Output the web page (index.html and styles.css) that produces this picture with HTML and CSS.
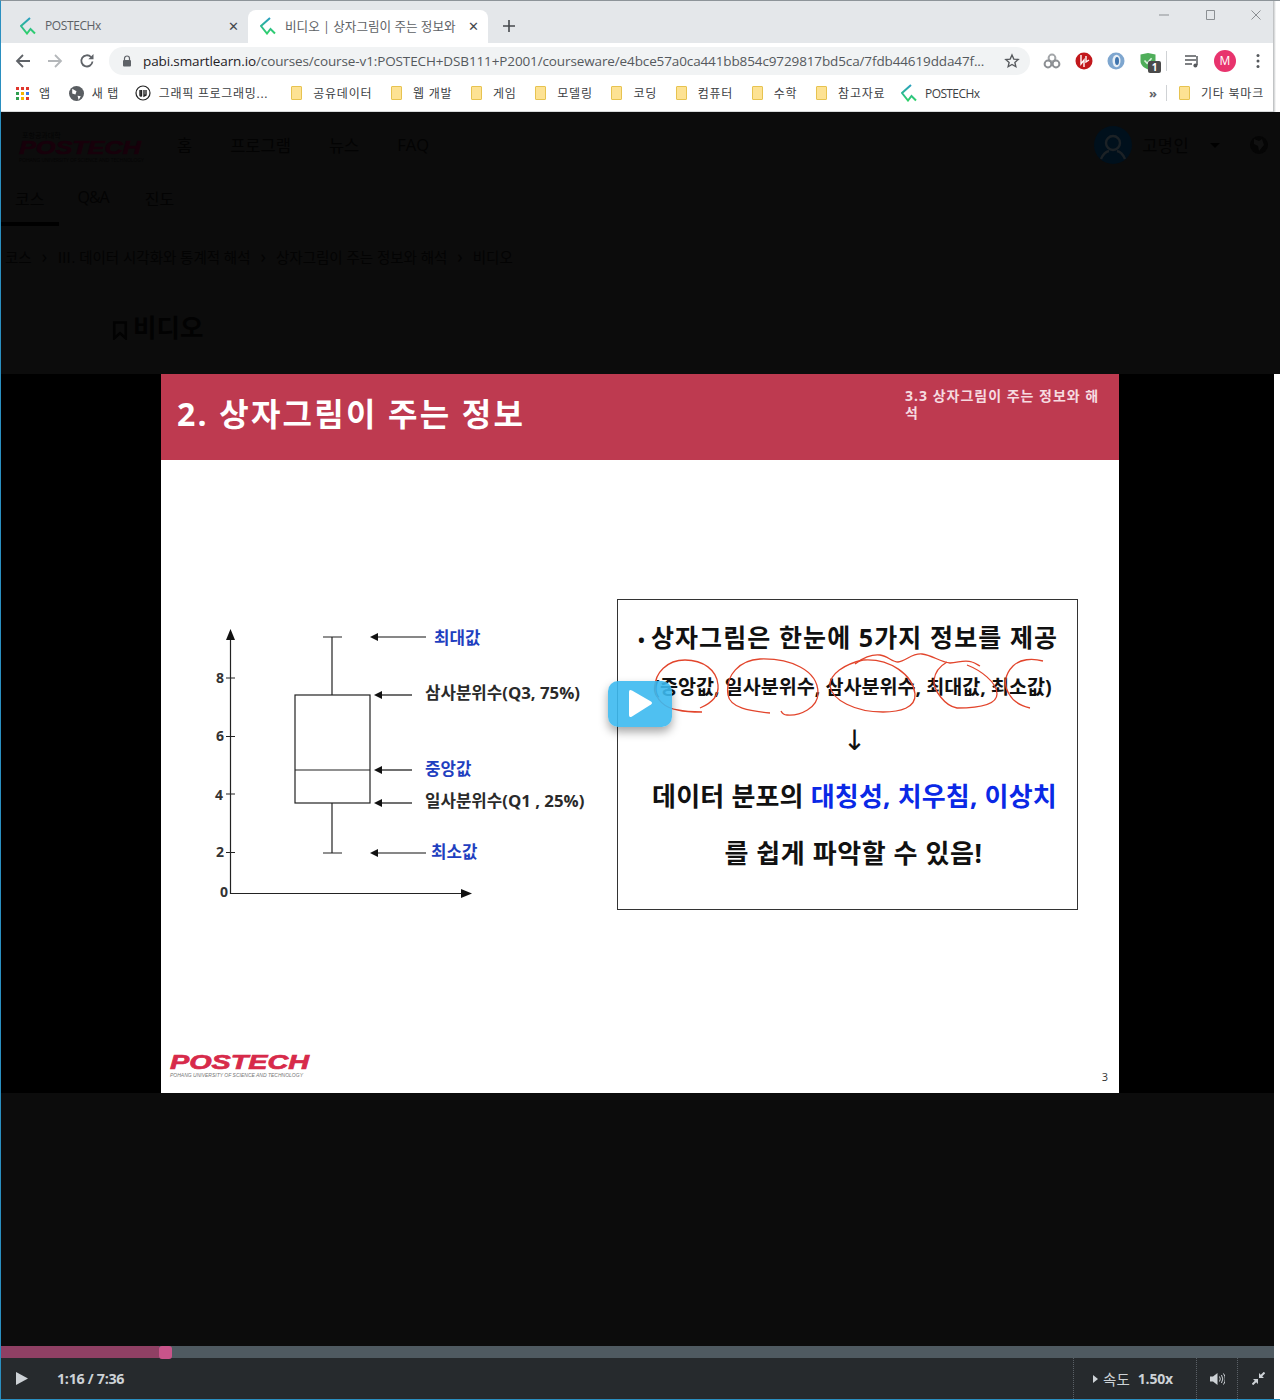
FILE: index.html
```html
<!DOCTYPE html>
<html lang="ko">
<head>
<meta charset="utf-8">
<title>비디오 | 상자그림이 주는 정보와 해석</title>
<link rel="stylesheet" href="styles.css">
</head>
<body>
<div class="window">

  <div class="tabstrip">
    <div class="tab first">
      <svg class="favicon" viewBox="0 0 16 18"><path d="M10 1 1 9l6 7.500 3.500-4.500 4.500 4.500" fill="none" stroke="url(#fav)" stroke-width="2"/><defs><linearGradient id="fav" x1="0" y1="0" x2="0" y2="1"><stop offset="0" stop-color="#2a9fc0"/><stop offset="1" stop-color="#2fd06a"/></linearGradient></defs></svg>
      <span class="tab-title">POSTECHx</span>
      <span class="tab-x">✕</span>
    </div>
    <div class="tab active">
      <svg class="favicon" viewBox="0 0 16 18"><path d="M10 1 1 9l6 7.500 3.500-4.500 4.500 4.500" fill="none" stroke="url(#fav)" stroke-width="2"/></svg>
      <span class="tab-title">비디오 | 상자그림이 주는 정보와</span>
      <span class="tab-x">✕</span>
    </div>
    <svg class="newtab" viewBox="0 0 12 12"><path d="M6 0v12M0 6h12" stroke="#45494d" stroke-width="1.6"/></svg>
    <div class="winbtns">
      <svg viewBox="0 0 12 12"><path d="M1 6h10" stroke="#8b8f93"/></svg>
      <svg viewBox="0 0 12 12"><path d="M2.500 1.500h8v9h-8z" fill="none" stroke="#8b8f93"/></svg>
      <svg viewBox="0 0 12 12"><path d="M1.500 1.500l9 9M10.500 1.500l-9 9" stroke="#8b8f93"/></svg>
    </div>
  </div>

  <div class="toolbar">
    <svg class="nav" viewBox="0 0 16 16"><path d="M15 8H2M8 2 2 8l6 6" fill="none" stroke="#5f6368" stroke-width="1.8"/></svg>
    <svg class="nav" viewBox="0 0 16 16"><path d="M1 8h13M8 2l6 6-6 6" fill="none" stroke="#b4b7ba" stroke-width="1.8"/></svg>
    <svg class="nav" viewBox="0 0 16 16"><path d="M13.500 8.500A5.600 5.600 0 1 1 12 4" fill="none" stroke="#5f6368" stroke-width="1.8"/><path d="M14.500 1v5.200H9.300z" fill="#5f6368"/></svg>
    <div class="omnibox">
      <svg class="lock" viewBox="0 0 10 12"><path d="M2.500 5V3.500a2.500 2.500 0 0 1 5 0V5" fill="none" stroke="#5f6368" stroke-width="1.2"/><rect x="1" y="5" width="8" height="6.500" rx="1" fill="#5f6368"/></svg>
      <span class="url"><b>pabi.smartlearn.io</b>/courses/course-v1:POSTECH+DSB111+P2001/courseware/e4bce57a0ca441bb854c9729817bd5ca/7fdb44619dda47f...</span>
      <svg class="star" viewBox="0 0 24 24"><path d="m12 3 2.700 6.100 6.600.6-5 4.400 1.500 6.500-5.800-3.400-5.800 3.400 1.500-6.500-5-4.400 6.600-.6z" fill="none" stroke="#55585c" stroke-width="2"/></svg>
    </div>
    <div class="extensions">
      <svg class="ext" viewBox="0 0 18 18"><circle cx="9" cy="6" r="3.400" fill="none" stroke="#a3a6a9" stroke-width="2"/><circle cx="5" cy="12" r="3.400" fill="none" stroke="#8d9094" stroke-width="2"/><circle cx="13" cy="12" r="3.400" fill="none" stroke="#8d9094" stroke-width="2"/></svg>
      <svg class="ext" viewBox="0 0 18 18"><circle cx="9" cy="9" r="8.500" fill="#c2181c"/><path d="M6 3v9l3-4v7M11 4v6l3-2" fill="none" stroke="#fff" stroke-width="1.400"/></svg>
      <svg class="ext" viewBox="0 0 18 18"><circle cx="9" cy="9" r="8.500" fill="#7ea6cf"/><ellipse cx="9.500" cy="9" rx="4" ry="6.200" fill="#e8eff6"/><ellipse cx="10" cy="9" rx="2" ry="4" fill="#3f74ad"/></svg>
      <span class="ext-shield">
        <svg class="ext" viewBox="0 0 18 18"><path d="M1.500 2.500 9 1l7.500 1.500V9c0 4-3.500 7-7.500 8.500C5 16 1.500 13 1.500 9z" fill="#4fae5a"/><path d="m5.500 8.500 2.600 2.800 4.500-5" fill="none" stroke="#d9f0dc" stroke-width="1.600"/></svg>
        <span class="badge">1</span>
      </span>
      <span class="sep"></span>
      <svg class="ext" viewBox="0 0 18 18"><path d="M2 4h11M2 8h11M2 12h7" stroke="#55585c" stroke-width="1.500"/><path d="M14 4v9" stroke="#55585c" stroke-width="1.500"/><circle cx="12.400" cy="13.400" r="2" fill="#55585c"/></svg>
      <span class="avatar">M</span>
      <svg class="kebab" viewBox="0 0 4 16"><circle cx="2" cy="2.500" r="1.500" fill="#55585c"/><circle cx="2" cy="8" r="1.500" fill="#55585c"/><circle cx="2" cy="13.500" r="1.500" fill="#55585c"/></svg>
    </div>
  </div>

  <div class="bookmarks">
    <span class="bm bm-apps">
      <span class="apps"><i class="r"></i><i class="r"></i><i class="r"></i><i class="g"></i><i class="y"></i><i class="b"></i><i class="g"></i><i class="y"></i><i class="r"></i></span>앱
    </span>
    <span class="bm bm-new">
      <svg class="bm-icon" viewBox="0 0 14 14"><circle cx="7" cy="7" r="7" fill="#5a5e62"/><path d="M3 2.500 7 5 6 8 3 7zM8 9l3 .5L9 13z" fill="#fff"/></svg>새 탭
    </span>
    <span class="bm bm-ue">
      <svg class="bm-icon" viewBox="0 0 16 16"><circle cx="8" cy="8" r="7" fill="none" stroke="#222" stroke-width="1.200"/><path d="M5 5v5q0 1.600 1.500.8V5M9 5v6l2-1V5" fill="none" stroke="#222" stroke-width="1.400"/></svg>그래픽 프로그래밍...
    </span>
    <span class="bm"><i class="folder"></i>공유데이터</span>
    <span class="bm"><i class="folder"></i>웹 개발</span>
    <span class="bm"><i class="folder"></i>게임</span>
    <span class="bm"><i class="folder"></i>모델링</span>
    <span class="bm"><i class="folder"></i>코딩</span>
    <span class="bm"><i class="folder"></i>컴퓨터</span>
    <span class="bm"><i class="folder"></i>수학</span>
    <span class="bm"><i class="folder"></i>참고자료</span>
    <span class="bm bm-posx">
      <svg class="favicon" viewBox="0 0 16 18"><path d="M10 1 1 9l6 7.500 3.500-4.500 4.500 4.500" fill="none" stroke="url(#fav)" stroke-width="2"/></svg>POSTECHx
    </span>
    <span class="bm-right">
      <span class="chevrons">»</span>
      <span class="bm-sep"></span>
      <span class="bm"><i class="folder"></i>기타 북마크</span>
    </span>
  </div>

  <div class="viewport">
    <div class="dimmed">
      <div class="site-head">
        <div class="site-logo">
          <span class="site-logo-kr">포항공과대학</span>
          <span class="site-logo-en">POSTECH</span>
          <span class="site-logo-sub">POHANG UNIVERSITY OF SCIENCE AND TECHNOLOGY</span>
        </div>
        <nav class="site-nav"><span>홈</span><span>프로그램</span><span>뉴스</span><span>FAQ</span></nav>
        <div class="site-user">
          <svg class="site-avatar" viewBox="0 0 38 38"><circle cx="19" cy="19" r="19" fill="#00101c"/><circle cx="19" cy="17" r="7" fill="none" stroke="#1c2226" stroke-width="2.400"/><path d="M7 33q3-7 8-8M31 33q-3-7-8-8" fill="none" stroke="#1c2226" stroke-width="2.400"/></svg>
          <span class="site-name">고명인</span>
          <i class="caret"></i>
          <svg class="globe" viewBox="0 0 18 18"><circle cx="9" cy="9" r="9" fill="#050505"/><path d="M4 3l5 2 3-2 2 6-5 6-1-5-4-2z" fill="#111"/></svg>
        </div>
      </div>
      <div class="course-tabs">
        <span class="course-tab on">코스</span><span class="course-tab qa">Q&amp;A</span><span class="course-tab">진도</span>
      </div>
      <div class="crumbs">
        <span>코스</span><i>›</i><span>Ⅲ. 데이터 시각화와 통계적 해석</span><i>›</i><span>상자그림이 주는 정보와 해석</span><i>›</i><span>비디오</span>
      </div>
      <div class="unit-title">
        <svg class="bookmark-icon" viewBox="0 0 14 18"><path d="M1.500 1.500h11v15L7 11.500l-5.500 5z" fill="none" stroke="#020202" stroke-width="2.400"/></svg>
        <h2>비디오</h2>
      </div>
    </div>

    <div class="stage">
      <div class="slide">
        <div class="slide-head">
          <h1>2. 상자그림이 주는 정보</h1>
          <p>3.3 상자그림이 주는 정보와 해<br>석</p>
        </div>
        <div class="slide-body">
          <svg class="boxplot" viewBox="0 0 410 300" width="410" height="300">
            <defs>
              <marker id="tip" markerWidth="8" markerHeight="8" refX="0" refY="4" orient="auto" markerUnits="userSpaceOnUse"><path d="M0 0 8 4 0 8z" fill="#111"/></marker>
            </defs>
            <g class="axis">
              <path d="M40.500 25V283.500H272"/>
              <path d="M36 68h9M36 126.500h9M36 184h9M36 242.500h9"/>
            </g>
            <path d="M36 30 40.500 19 45 30z" fill="#111"/>
            <path d="M271 279l11 4.500-11 4.500z" fill="#111"/>
            <g class="axis-num">
              <text x="26" y="73">8</text><text x="26" y="131">6</text><text x="25" y="190">4</text><text x="26" y="247">2</text><text x="30" y="287">0</text>
            </g>
            <g class="box">
              <path d="M133 27h19M142 27v58M142 193v50M133 243h19"/>
              <rect x="105" y="85" width="75" height="108"/>
              <path d="M105 160h75"/>
            </g>
            <g class="arrows">
              <path d="M236 27H188" marker-end="url(#tip)"/>
              <path d="M222 85H192" marker-end="url(#tip)"/>
              <path d="M222 160H192" marker-end="url(#tip)"/>
              <path d="M222 193H192" marker-end="url(#tip)"/>
              <path d="M236 243H188" marker-end="url(#tip)"/>
            </g>
            <g class="lbl">
              <text class="blue" x="244" y="34">최대값</text>
              <text x="235" y="89">삼사분위수(Q3, 75%)</text>
              <text class="blue" x="235" y="165">중앙값</text>
              <text x="235" y="197">일사분위수(Q1 , 25%)</text>
              <text class="blue" x="241" y="248">최소값</text>
            </g>
          </svg>

          <div class="summary">
            <p class="sum-title"><span class="dot">•</span>상자그림은 한눈에 5가지 정보를 제공</p>
            <p class="sum-list">(중앙값, 일사분위수, 삼사분위수, 최대값, 최소값)</p>
            <p class="sum-arrow">↓</p>
            <p class="sum-big">데이터 분포의 <em>대칭성, 치우침, 이상치</em></p>
            <p class="sum-big sum-last">를 쉽게 파악할 수 있음!</p>
            <svg class="scribble" viewBox="0 0 490 160" width="490" height="160">
              <path d="M100 118C112 113 119 105 118 95 117 80 103 70 85 70 67 70 55 83 55 97 55 110 65 118 78 120 86 122 95 122 102 122"/>
              <path d="M170 123C150 121 130 118 128 105 125 85 140 70 160 69 190 68 218 80 218 103 218 118 200 126 187 125 184 125 182 123 181 121"/>
              <path d="M263 70C290 68 313 85 315 104 316 118 300 122 283 122 255 122 232 110 230 96 229 84 245 74 263 70"/>
              <path d="M255 74C262 68 272 64 280 65 288 66 292 72 298 72 306 71 312 63 322 64 332 65 340 72 350 73 358 73 364 69 372 72 375 73 378 75 380 76"/>
              <path d="M367 75C380 80 397 92 397 104 397 114 380 118 357 118 345 116 333 100 334 90 335 82 340 76 347 72"/>
              <path d="M443 71C432 68 420 69 413 76 405 84 403 95 409 104 413 111 421 116 430 118"/>
            </svg>
          </div>
        </div>
        <div class="slide-foot">
          <div class="slide-logo">
            <span class="slide-logo-en">POSTECH</span>
            <span class="slide-logo-sub">POHANG UNIVERSITY OF SCIENCE AND TECHNOLOGY</span>
          </div>
          <span class="slide-num">3</span>
        </div>
      </div>
      <div class="bigplay"><svg viewBox="0 0 26 30" width="26" height="30"><path d="M2 3q0-3 3-1.500l19 11q2 1.500 0 3L5 27.500q-3 1.500-3-1.500z" fill="#fff"/></svg></div>
    </div>

    <div class="below"></div>

    <div class="player">
      <div class="scrub"><div class="scrub-fill"></div><div class="scrub-knob"></div></div>
      <div class="controls">
        <svg class="ctl-play" viewBox="0 0 12 13"><path d="M0 0l12 6.500L0 13z" fill="#cdd2d6"/></svg>
        <span class="time">1:16 / 7:36</span>
        <div class="ctl-right">
          <div class="ctl-cell speed"><i class="tri"></i>속도 <b>1.50x</b></div>
          <div class="ctl-cell vol">
            <svg viewBox="0 0 15 14" width="15" height="14"><path d="M0 4.500h3L7.500 1v12L3 9.500H0z" fill="#cdd2d6"/><path d="M9.500 4.500q1.600 2.500 0 5M11.500 3q2.600 4 0 8M13.500 1.500q3.600 5.500 0 11" fill="none" stroke="#cdd2d6"/></svg>
          </div>
          <div class="ctl-cell full">
            <svg viewBox="0 0 13 13" width="13" height="13"><path d="M12.500.5 8 5M.5 12.500 5 8" stroke="#cdd2d6" stroke-width="2"/><path d="M7 1v5h5zM1 7h5v5z" fill="#cdd2d6"/></svg>
          </div>
        </div>
      </div>
    </div>
    <div class="edge"></div>
  </div>
  <div class="chrome-edge"></div>
</div>
</body>
</html>
```
FILE: styles.css
```css
* {
  box-sizing: border-box;
}

html, body {
  margin: 0;
  padding: 0;
}

body {
  font-family: "Open Sans", "Noto Sans CJK KR", sans-serif;
  background: #fff;
}

p, h1, h2 {
  margin: 0;
}

.window {
  width: 1280px;
  height: 1400px;
  display: flex;
  flex-direction: column;
  border-top: 1px solid #8d9499;
  border-left: 1px solid #2a8fc0;
  overflow: hidden;
  position: relative;
}

/* tab strip */

.tabstrip {
  height: 42px;
  background: #e4e7ea;
  display: flex;
  align-items: flex-end;
  flex: none;
  padding-left: 7px;
}

.tab {
  width: 240px;
  height: 33px;
  display: flex;
  align-items: center;
  padding: 0 6px 2px 12px;
  font-size: 12px;
  color: #5d6165;
}

.tab.first .tab-title {
  letter-spacing: -0.4px;
}

.tab.active {
  background: #fff;
  border-radius: 8px 8px 0 0;
  font-size: 12.6px;
}

.favicon {
  width: 16px;
  height: 18px;
  flex: none;
}

.tab-title {
  flex: 1;
  margin-left: 9px;
  white-space: nowrap;
  overflow: hidden;
}

.tab-x {
  font-size: 13px;
  color: #45494d;
  width: 14px;
  margin-left: 4px;
}

.newtab {
  width: 12px;
  height: 12px;
  margin: 0 0 11px 15px;
}

.winbtns {
  margin-left: auto;
  align-self: flex-start;
  display: flex;
  gap: 34px;
  padding: 8px 18px 0 0;
}

.winbtns svg {
  width: 12px;
  height: 12px;
}

/* toolbar */

.toolbar {
  height: 37px;
  background: #fff;
  display: flex;
  align-items: center;
  padding: 0 0 1px 14px;
  flex: none;
}

.nav {
  width: 16px;
  height: 16px;
  margin-right: 16px;
}

.omnibox {
  width: 921px;
  height: 28px;
  margin-left: -2px;
  border-radius: 14px;
  background: #f1f3f4;
  display: flex;
  align-items: center;
  padding-left: 13px;
}

.lock {
  width: 10px;
  height: 12px;
  flex: none;
}

.url {
  margin-left: 11px;
  font-size: 13.5px;
  color: #55595d;
  white-space: nowrap;
  letter-spacing: -0.12px;
}

.url b {
  font-weight: 400;
  color: #1f2124;
}

.star {
  width: 16px;
  height: 16px;
  margin-left: auto;
  margin-right: 10px;
  flex: none;
}

.extensions {
  display: flex;
  align-items: center;
  margin-left: 13px;
}

.ext {
  width: 18px;
  height: 18px;
  display: block;
  margin-right: 14px;
}

.ext-shield {
  position: relative;
}

.badge {
  position: absolute;
  left: 9px;
  top: 9px;
  width: 13px;
  height: 12px;
  background: #4a4a4a;
  color: #fff;
  border-radius: 2px;
  font-size: 10px;
  font-weight: 700;
  line-height: 12px;
  text-align: center;
}

.sep {
  width: 1px;
  height: 20px;
  background: #cfd2d5;
  margin: 0 16px 0 -5px;
}

.avatar {
  width: 22px;
  height: 22px;
  border-radius: 50%;
  background: #e8336d;
  color: #fff;
  font-size: 12px;
  line-height: 22px;
  text-align: center;
  margin-left: -1px;
}

.kebab {
  width: 4px;
  height: 16px;
  margin-left: 20px;
}

/* bookmarks */

.bookmarks {
  height: 32px;
  background: #fff;
  display: flex;
  align-items: center;
  padding: 0 0 5px 15px;
  font-size: 12px;
  color: #3c4043;
  flex: none;
  border-bottom: 1px solid #d8dadc;
}

.bm {
  display: flex;
  align-items: center;
  margin-right: 18.6px;
  white-space: nowrap;
  letter-spacing: 0.8px;
}

.bm-apps {
  margin-right: 18px;
}

.apps {
  display: grid;
  grid-template-columns: repeat(3, 3px);
  gap: 2px;
  margin-right: 10px;
}

.apps i {
  width: 3px;
  height: 3px;
  display: block;
}

.apps .r { background: #e0362c; }
.apps .g { background: #2f9e4f; }
.apps .y { background: #f5b400; }
.apps .b { background: #3b78e7; }

.bm-icon {
  width: 15px;
  height: 15px;
  margin-right: 8px;
}

.bm-new {
  letter-spacing: 0.6px;
  margin-right: 16px;
}

.bm-ue .bm-icon {
  width: 16px;
  height: 16px;
  margin-right: 8px;
}

.bm-ue {
  letter-spacing: 0.7px;
  margin-right: 23px;
}

.folder {
  width: 11px;
  height: 14px;
  background: #fde293;
  border: 1px solid #e7c350;
  border-radius: 1px;
  margin-right: 11px;
  display: block;
}

.bm-posx {
  letter-spacing: -0.6px;
  margin-left: -3px;
}

.bm-posx .favicon {
  margin-right: 8px;
}

.bm-right {
  margin-left: auto;
  display: flex;
  align-items: center;
}

.bm-right .bm {
  margin-right: 16px;
}

.chevrons {
  font-size: 13px;
  font-weight: 700;
  color: #5f6368;
}

.bm-sep {
  width: 1px;
  height: 16px;
  background: #cfd2d5;
  margin: 0 12px 0 9px;
}

/* dimmed page behind the lightbox */

.viewport {
  flex: 1;
  display: flex;
  flex-direction: column;
  position: relative;
  background: #0c0c0c;
  min-height: 0;
}

.dimmed {
  height: 262px;
  flex: none;
  color: #030303;
  background: #0c0c0c;
}

.site-head {
  height: 68px;
  display: flex;
  align-items: center;
  padding: 0 0 2px 18px;
}

.site-logo {
  width: 125px;
  display: flex;
  flex-direction: column;
  margin-top: 5px;
}

.site-logo-kr {
  font-size: 7px;
  line-height: 8px;
  margin-left: 3px;
  color: #040404;
}

.site-logo-en {
  font: italic 900 18px/17px "Liberation Sans", sans-serif;
  color: #17000a;
  -webkit-text-stroke: 0.6px #17000a;
  white-space: nowrap;
  transform: scaleX(1.4);
  transform-origin: left center;
}

.site-logo-sub {
  font-size: 5px;
  line-height: 7px;
  white-space: nowrap;
  color: #050505;
}

.site-nav {
  display: flex;
  font-size: 16.5px;
  margin-left: 33px;
  gap: 38px;
}

.site-user {
  margin-left: auto;
  display: flex;
  align-items: center;
  padding-right: 12px;
}

.site-avatar {
  width: 38px;
  height: 38px;
}

.site-name {
  font-size: 16.5px;
  margin-left: 10px;
  letter-spacing: 0.4px;
}

.caret {
  width: 0;
  height: 0;
  border: 5px solid transparent;
  border-top: 5px solid #000;
  border-bottom: 0;
  margin: 0 0 0 21px;
}

.globe {
  width: 18px;
  height: 18px;
  margin-left: 30px;
}

.course-tabs {
  display: flex;
  height: 55px;
  padding-left: 14px;
  font-size: 16px;
  position: relative;
}

.course-tab {
  margin-right: 33px;
  padding-top: 6px;
}

.course-tab.qa {
  letter-spacing: -1px;
  margin-right: 36px;
}

.course-tab.on::after {
  content: "";
  position: absolute;
  left: 0;
  top: 42px;
  width: 58px;
  height: 4px;
  background: #000;
}

.crumbs {
  display: flex;
  gap: 8px;
  padding: 11px 0 0 4px;
  font-size: 14.5px;
  height: 62px;
  white-space: nowrap;
}

.crumbs i {
  font-style: normal;
  font-size: 18px;
  line-height: 20px;
  margin: 0 2px;
}

.unit-title {
  display: flex;
  align-items: flex-end;
  padding: 6px 0 0 111px;
  height: 46px;
  gap: 5px;
}

.bookmark-icon {
  width: 16px;
  height: 19px;
  margin-bottom: 3px;
}

.unit-title h2 {
  font-size: 25.5px;
  line-height: 32px;
  font-weight: 700;
  color: #020202;
}

/* lightbox */

.stage {
  height: 719px;
  flex: none;
  background: #000;
  display: flex;
  justify-content: center;
  position: relative;
}

.slide {
  width: 958px;
  height: 719px;
  background: #fff;
  display: flex;
  flex-direction: column;
  margin-left: -1px;
}

.slide-head {
  height: 86px;
  flex: none;
  background: #be3a50;
  color: #fff;
  display: flex;
  justify-content: space-between;
  padding: 0 21px 0 16px;
}

.slide-head h1 {
  font-size: 32px;
  line-height: 80px;
  font-weight: 700;
  letter-spacing: 2.2px;
  white-space: nowrap;
}

.slide-head p {
  width: 193px;
  font-size: 14px;
  line-height: 17px;
  padding-top: 13px;
  color: #f6dbe0;
  font-weight: 700;
  letter-spacing: 1px;
  white-space: nowrap;
}

.slide-body {
  flex: 1;
  display: flex;
  padding: 139px 0 0 29px;
  align-items: flex-start;
  min-height: 0;
}

.boxplot {
  flex: none;
  margin-top: 11px;
}

.axis path,
.box path,
.box rect,
.arrows path {
  fill: none;
  stroke: #222;
  stroke-width: 1.2;
}

.arrows path {
  stroke: #111;
}

.axis-num text {
  font: 700 14px "Open Sans", sans-serif;
  fill: #333;
}

.lbl text {
  font: 700 16.8px "Open Sans", "Noto Sans CJK KR", sans-serif;
  fill: #2a2a2a;
}

.lbl text.blue {
  fill: #1f3fc0;
}

.summary {
  width: 461px;
  height: 311px;
  margin-left: 17px;
  border: 1px solid #333;
  position: relative;
  color: #111;
  text-align: center;
  font-weight: 700;
}

.summary p {
  white-space: nowrap;
}

.sum-title {
  font-size: 25px;
  line-height: 34px;
  padding-top: 20px;
  text-align: left;
  padding-left: 20px;
  letter-spacing: 1.1px;
}

.dot {
  font-size: 18px;
  margin-right: 5px;
}

.sum-list {
  font-size: 19.6px;
  line-height: 30px;
  margin-top: 15px;
  padding-left: 10px;
}

.sum-arrow {
  font: 400 28px/30px "DejaVu Sans", sans-serif;
  margin-top: 24px;
  padding-left: 14px;
}

.sum-big {
  font-size: 26px;
  line-height: 36px;
  margin-top: 22px;
  padding-left: 14px;
  letter-spacing: 0.2px;
}

.sum-big em {
  font-style: normal;
  color: #0a28e6;
}

.sum-last {
  margin-top: 21px;
  padding-left: 12px;
  letter-spacing: 0.6px;
}

.scribble {
  position: absolute;
  left: -18px;
  top: -10px;
}

.scribble path {
  fill: none;
  stroke: #e2452c;
  stroke-width: 1.3;
}

.slide-foot {
  height: 52px;
  flex: none;
  display: flex;
  justify-content: space-between;
  padding: 11px 11px 0 9px;
}

.slide-logo {
  display: flex;
  flex-direction: column;
  width: 142px;
}

.slide-logo-en {
  font: italic 900 21px/19px "Liberation Sans", sans-serif;
  color: #d72a4a;
  -webkit-text-stroke: 0.7px #d72a4a;
  white-space: nowrap;
  transform: scaleX(1.37);
  transform-origin: left center;
}

.slide-logo-sub {
  font: italic 5px/7px "Liberation Sans", sans-serif;
  color: #777;
  white-space: nowrap;
  margin-top: 1px;
}

.slide-num {
  font-size: 11px;
  line-height: 50px;
  color: #333;
}

.bigplay {
  position: absolute;
  left: 607px;
  top: 307px;
  width: 64px;
  height: 46px;
  border-radius: 10px;
  background: rgba(60, 185, 240, 0.9);
  box-shadow: 0 5px 10px rgba(0, 0, 0, 0.35);
  display: flex;
  align-items: center;
  justify-content: center;
}

.below {
  flex: 1;
  background: #0c0c0c;
}

/* player bar */

.player {
  flex: none;
  height: 54px;
}

.scrub {
  height: 12px;
  background: #4f5a61;
  position: relative;
}

.scrub-fill {
  width: 158px;
  height: 100%;
  background: #8f4064;
}

.scrub-knob {
  position: absolute;
  left: 158px;
  top: 0;
  width: 13px;
  height: 13px;
  border-radius: 3px;
  background: #c8548a;
}

.controls {
  height: 42px;
  background: #262a2d;
  border-bottom: 1px solid #2a8fc0;
  display: flex;
  align-items: center;
  padding-left: 15px;
  color: #cdd2d6;
}

.ctl-play {
  width: 12px;
  height: 13px;
}

.time {
  margin-left: 29px;
  font-size: 14.3px;
  font-weight: 700;
  letter-spacing: -0.3px;
}

.ctl-right {
  margin-left: auto;
  display: flex;
  height: 100%;
  margin-right: 7px;
}

.ctl-cell {
  display: flex;
  align-items: center;
  justify-content: center;
  border-left: 1px dotted #5a6066;
}

.speed {
  width: 123px;
  font-size: 14.5px;
  gap: 5px;
  white-space: nowrap;
  padding-right: 4px;
}

.speed b {
  margin-left: 3px;
  font-size: 14px;
  letter-spacing: -0.2px;
}

.tri {
  width: 0;
  height: 0;
  border-left: 5px solid #cdd2d6;
  border-top: 4px solid transparent;
  border-bottom: 4px solid transparent;
}

.vol {
  width: 41px;
}

.full {
  width: 36px;
  padding-left: 5px;
}

/* the gutter down the right side of the window */

.edge {
  position: absolute;
  right: 0;
  top: 262px;
  bottom: 1px;
  width: 6px;
  background: #fff;
}

.chrome-edge {
  position: absolute;
  right: 0;
  top: 0;
  height: 111px;
  width: 7px;
  background: linear-gradient(to right, #b5b8ba, #fff 3px);
}
```
